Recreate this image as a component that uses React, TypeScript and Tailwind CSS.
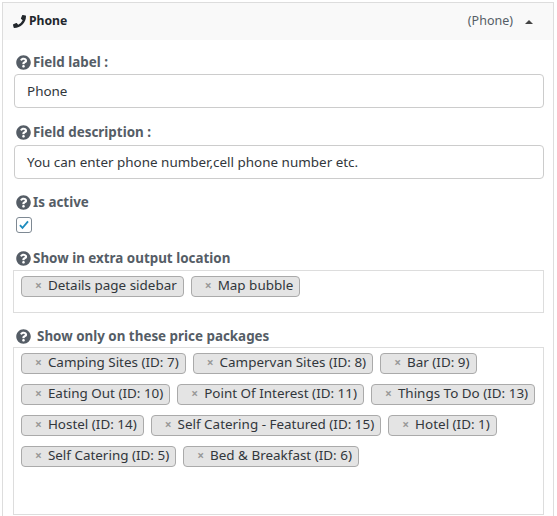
import { ReactNode } from "react";
import { FaPhoneAlt, FaQuestionCircle } from "react-icons/fa";

const HelpIcon = () => <FaQuestionCircle className="h-[15px] w-[15px] shrink-0 text-[#555d66]" />;

const Label = ({ children, className = "gap-[2px]" }: { children: ReactNode; className?: string }) => (
  <div className={`flex h-[20px] items-center pl-[2px] text-[13.4px] font-bold text-[#555d66] ${className}`}>
    <HelpIcon />
    <span>{children}</span>
  </div>
);

const TextField = ({ value }: { value: string }) => (
  <div className="flex h-[34px] items-center rounded-[4px] border border-[#ccc] bg-white pl-[12px] text-[13.45px] text-[#32373c]">
    {value}
  </div>
);

const Tag = ({ text }: { text: string }) => (
  <span className="flex h-[21px] items-center rounded-[4px] border border-[#aaa] bg-[#e4e4e4] pb-px pl-[13px] pr-[6px] text-[13.45px] leading-none text-[#32373c]">
    <span className="mr-[6px] text-[12px] font-bold text-[#999]">×</span>
    {text}
  </span>
);

const priceTags = [
  "Camping Sites (ID: 7)",
  "Campervan Sites (ID: 8)",
  "Bar (ID: 9)",
  "Eating Out (ID: 10)",
  "Point Of Interest (ID: 11)",
  "Things To Do (ID: 13)",
  "Hostel (ID: 14)",
  "Self Catering - Featured (ID: 15)",
  "Hotel (ID: 1)",
  "Self Catering (ID: 5)",
  "Bed & Breakfast (ID: 6)",
];

export default function App() {
  return (
    <div className="h-[516px] w-[557px] overflow-hidden bg-white pl-[2px] pr-[2px] pt-[2px] font-['Noto_Sans',sans-serif]">
      <div className="h-[520px] w-[552px] border border-[#ddd]">
        <div className="flex h-[37px] items-center justify-between bg-[#f9f9f9] pl-[10px] pr-[20px]">
          <div className="flex items-center gap-[3px] text-[12.2px] font-bold text-[#23282d]">
            <FaPhoneAlt className="h-[13px] w-[13px] shrink-0 -scale-x-100" />
            Phone
          </div>
          <div className="flex items-center gap-[12px] text-[12.5px] text-[#555d66]">
            (Phone)
            <span className="h-0 w-0 border-x-[4px] border-b-[4px] border-x-transparent border-b-[#444]" />
          </div>
        </div>

        <div className="pl-[11px] pr-[9px]">
          <div className="pt-[12px]">
            <Label>Field label :</Label>
            <div className="pt-[2px]">
              <TextField value="Phone" />
            </div>
          </div>
          <div className="pt-[14px]">
            <Label>Field description :</Label>
            <div className="pt-[3px]">
              <TextField value="You can enter phone number,cell phone number etc." />
            </div>
          </div>
          <div className="pt-[13px]">
            <Label>Is active</Label>
            <div className="pl-[2px] pt-[5px]">
              <div className="flex h-[16px] w-[16px] items-center justify-center rounded-[3px] border border-[#7e8993] bg-white">
                <svg viewBox="0 0 16 16" className="h-[14px] w-[14px] text-[#1e8cbe]" fill="currentColor">
                  <path d="M6.300 12.800 2.600 8.900l1.500-1.500 2.200 2.200 5.500-6.400 1.600 1.400z" />
                </svg>
              </div>
            </div>
          </div>
          <div className="pt-[15px]">
            <Label>Show in extra output location</Label>
            <div className="-ml-px mt-[2px] flex h-[43px] flex-wrap content-start gap-[7px] border border-[#ddd] pl-[7px] pt-[5px]">
              <Tag text="Details page sidebar" />
              <Tag text="Map bubble" />
            </div>
          </div>
          <div className="pt-[13px]">
            <Label className="gap-[6px]">Show only on these price packages</Label>
            <div className="-ml-px mt-px flex h-[168px] flex-wrap content-start gap-x-[7px] gap-y-[10px] border border-[#ddd] pl-[7px] pt-[5px]">
              {priceTags.map((t) => (
                <Tag key={t} text={t} />
              ))}
            </div>
          </div>
        </div>
      </div>
    </div>
  );
}
